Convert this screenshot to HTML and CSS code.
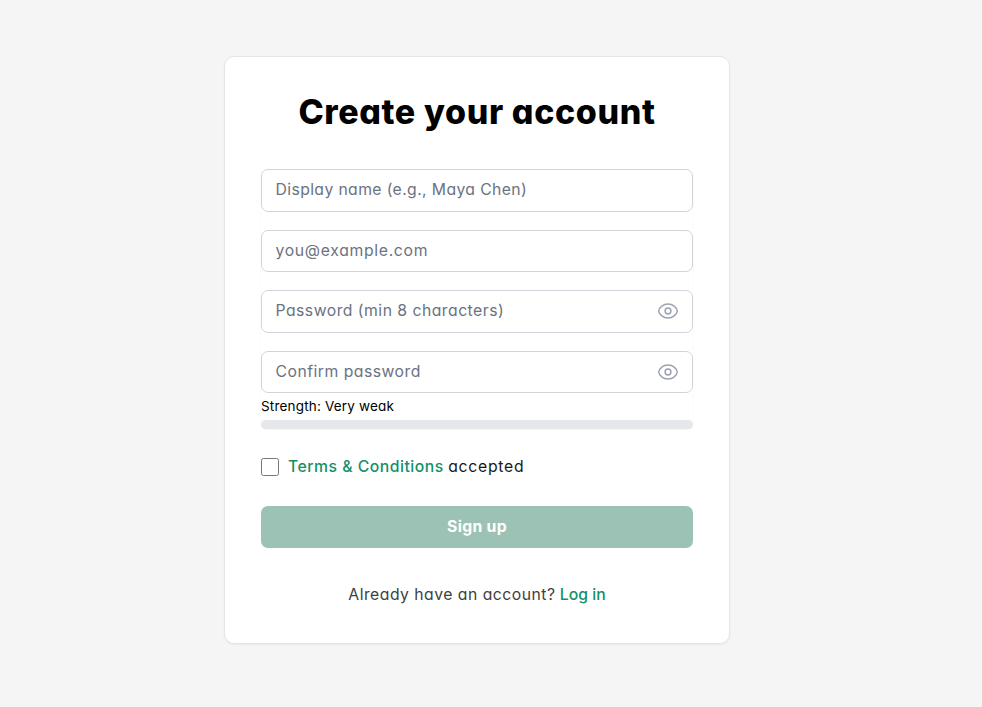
FILE: index.html
```html
<!DOCTYPE html>
<html lang="en">
<head>
<meta charset="utf-8">
<title>Create your account</title>
<link rel="stylesheet" href="styles.css">
</head>
<body>
<main class="card">
  <h1 class="title">Create your account</h1>
  <form class="form">
    <div class="fields">
      <input class="input name" type="text" placeholder="Display name (e.g., Maya Chen)">
      <input class="input email" type="email" placeholder="you@example.com">
      <div class="password">
        <input class="input pass" type="password" placeholder="Password (min 8 characters)">
        <svg class="eye" viewBox="0 0 22 22" fill="none" stroke="currentColor" stroke-width="1.5"><path d="M1.7 11C2.3 7.1 6.2 4 11 4s8.7 3.1 9.3 7c-.6 3.9-4.5 7-9.3 7s-8.7-3.1-9.3-7Z"/><circle cx="11" cy="11" r="2.9"/></svg>
      </div>
      <div class="password">
        <input class="input confirm" type="password" placeholder="Confirm password">
        <svg class="eye" viewBox="0 0 22 22" fill="none" stroke="currentColor" stroke-width="1.5"><path d="M1.7 11C2.3 7.1 6.2 4 11 4s8.7 3.1 9.3 7c-.6 3.9-4.5 7-9.3 7s-8.7-3.1-9.3-7Z"/><circle cx="11" cy="11" r="2.9"/></svg>
      </div>
      <div class="strength">
        <span class="strength-text">Strength: Very weak</span>
        <div class="meter"></div>
      </div>
    </div>
    <label class="terms"><input class="check" type="checkbox"><span><a class="link terms-link">Terms &amp; Conditions</a> <span class="accepted">accepted</span></span></label>
    <button class="submit" type="button">Sign up</button>
  </form>
  <p class="login"><span class="question">Already have an account?</span> <a class="link login-link">Log in</a></p>
</main>
</body>
</html>
```

FILE: styles.css
```css
* { box-sizing: border-box; }
body {
  margin: 0;
  padding: 56px 28px 0 0;
  min-height: 707px;
  background: #f5f5f5;
  font-family: Inter, "Open Sans", sans-serif;
  font-feature-settings: "cv11" 1;
  font-size: 15.75px;
  color: #000;
}
.card {
  width: 506px;
  height: 588px;
  margin: 0 auto;
  padding: 36px;
  background: #fff;
  border: 1px solid #e5e5e5;
  border-radius: 10px;
  box-shadow: 0 1px 2px rgba(0, 0, 0, .05);
}
.title {
  margin: -1px 0 37px;
  font-size: 34px;
  line-height: 40px;
  font-weight: 800;
  letter-spacing: .62px;
  text-align: center;
  white-space: nowrap;
}
.fields {
  height: 260px;
  border-radius: 7px;
  box-shadow: 0 1px 2px rgba(0, 0, 0, .05);
}
.input {
  display: block;
  width: 100%;
  height: 42.5px;
  margin: 0 0 18.1px;
  padding: 0 14px 2px 13.5px;
  border: 1px solid #d1d5db;
  border-radius: 7px;
  background: #fff;
  font: inherit;
  font-feature-settings: inherit;
  outline: none;
}
.input::placeholder { color: #6b7280; opacity: 1; }
.name { letter-spacing: .38px; }
.email { letter-spacing: .68px; padding-bottom: 1px; }
.pass, .confirm { letter-spacing: .48px; }
.password { position: relative; }
.eye {
  position: absolute;
  top: 10px;
  right: 14px;
  width: 22px;
  height: 22px;
  color: #9ca3af;
}
.confirm { margin-bottom: 0; }
.strength-text {
  display: block;
  padding-top: 3px;
  height: 26.5px;
  font-size: 13.5px;
  line-height: 21px;
  letter-spacing: .18px;
}
.meter { height: 9px; border-radius: 5px; background: #e5e7eb; }
.terms {
  display: flex;
  align-items: center;
  height: 24px;
  margin-top: 26px;
  color: #171717;
}
.terms > span { margin-top: -2px; }
.check { width: 18px; height: 18px; margin: 0 9px 0 0; }
.link { color: #158f68; font-weight: 500; }
.terms-link { letter-spacing: .5px; }
.accepted { letter-spacing: .72px; }
.submit {
  display: block;
  width: 100%;
  height: 42px;
  margin-top: 27px;
  padding: 0 0 1px;
  border: 0;
  border-radius: 7px;
  background: #9cc2b5;
  color: #fff;
  font: inherit;
  font-weight: 700;
  font-feature-settings: inherit;
  letter-spacing: .3px;
}
.login {
  margin: 35px 0 0;
  line-height: 24px;
  text-align: center;
  color: #404040;
}
.question { letter-spacing: .48px; }
```
